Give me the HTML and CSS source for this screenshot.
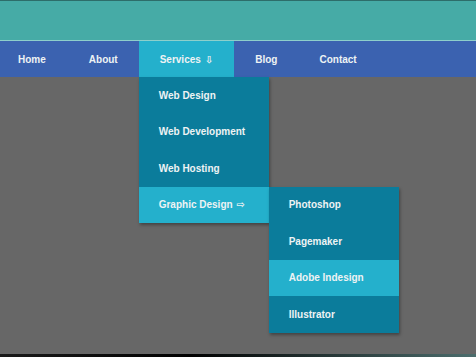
FILE: index.html
```html
<!DOCTYPE html>
<html>
	<head>
		<link rel="stylesheet" href="styles.css">
	</head>
	<body>
		<div class="screen">
			<div class="banner"></div>
			<ul class="menu">
				<li class="menu_item first"><a href="#">Home</a></li>
				<li class="menu_item"><a href="#">About</a></li>
				<li class="menu_item active">
					<a href="#">Services <span class="arrow">&#8681;</span></a>
					<ul class="dropdown">
						<li><a href="#">Web Design</a></li>
						<li><a href="#">Web Development</a></li>
						<li><a href="#">Web Hosting</a></li>
						<li class="has_sub active">
							<a href="#">Graphic Design <span class="arrow">&#8680;</span></a>
							<ul class="dropdown sub">
								<li><a href="#">Photoshop</a></li>
								<li><a href="#">Pagemaker</a></li>
								<li class="active"><a href="#">Adobe Indesign</a></li>
								<li><a href="#">Illustrator</a></li>
							</ul>
						</li>
					</ul>
				</li>
				<li class="menu_item"><a href="#">Blog</a></li>
				<li class="menu_item"><a href="#">Contact</a></li>
			</ul>
			<div class="content"></div>
			<div class="bottom_edge"></div>
		</div>
	</body>
</html>
```
FILE: styles.css
```css
html	{
	height: 100%;
	overflow: hidden;
}
body	{
	height: 100%;
	margin: 0;
	background: #676767;
	font-family: 'Liberation Sans', Arial, sans-serif;
}
ul	{
	list-style: none;
	margin: 0;
	padding: 0;
}
a	{
	color: #eef3f4;
	text-decoration: none;
	font-size: 10px;
	font-weight: bold;
}
.screen	{
	display: flex;
	flex-direction: column;
	height: 100%;
}
.banner	{
	height: 39px;
	background: #46aba6;
	border-top: 1px solid #2d6d6a;
	border-bottom: 1px solid #8ecfcb;
}
.menu	{
	display: flex;
	height: 36px;
	background: #3b62b0;
	padding-left: 0;
	margin-left: -2px;
}
.menu_item	{
	position: relative;
	display: flex;
	align-items: center;
}
.menu_item > a	{
	display: flex;
	align-items: center;
	height: 100%;
	padding: 0 21px;
}
.menu_item.first > a	{
	padding-left: 20px;
	padding-right: 22px;
}
.menu_item.active	{
	background: #24b0cc;
}
.arrow	{
	font-family: 'DejaVu Sans', sans-serif;
	font-weight: bold;
	font-size: 10px;
	margin-left: 4px;
}
.dropdown	{
	position: absolute;
	top: 36px;
	left: 0;
	width: 130px;
	background: #0b7c9b;
	box-shadow: 1px 2px 3px rgba(0, 0, 0, 0.35);
}
.dropdown li	{
	position: relative;
	height: 36.5px;
}
.dropdown li a	{
	display: flex;
	align-items: center;
	height: 100%;
	padding-left: 20px;
}
.dropdown li.active	{
	background: #24b0cc;
}
.dropdown.sub	{
	top: 0;
	left: 130px;
}
.content	{
	flex: 1;
}
.bottom_edge	{
	height: 3px;
	background: linear-gradient(to right, #1a1a1a, #000 40%, #4d6e6e);
}
```
